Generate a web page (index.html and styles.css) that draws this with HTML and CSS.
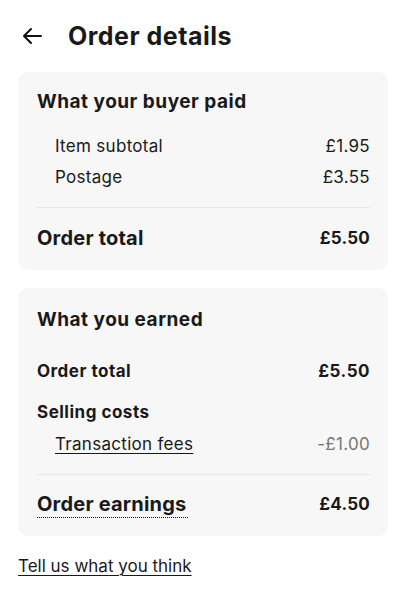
FILE: index.html
```html
<!DOCTYPE html>
<html>
<head>
<meta charset="utf-8">
<link rel="stylesheet" href="styles.css">
</head>
<body>
<div class="page">
  <header class="header">
    <svg class="back" width="22" height="22" viewBox="0 0 22 22" fill="none" stroke="#111" stroke-width="2" stroke-linecap="round" stroke-linejoin="round">
      <path d="M20 11H3M10 4L3 11L10 18"/>
    </svg>
    <h1 class="title">Order details</h1>
  </header>

  <section class="card">
    <h2 class="card-title">What your buyer paid</h2>
    <div class="rows indent">
      <div class="row"><span>Item subtotal</span><span>£1.95</span></div>
      <div class="row"><span>Postage</span><span>£3.55</span></div>
    </div>
    <div class="divider"></div>
    <div class="row total"><span>Order total</span><span class="total-val">£5.50</span></div>
  </section>

  <section class="card card2">
    <h2 class="card-title">What you earned</h2>
    <div class="row strong"><span>Order total</span><span>£5.50</span></div>
    <div class="row strong sc"><span>Selling costs</span></div>
    <div class="row indent fee"><span class="link">Transaction fees</span><span class="muted">-£1.00</span></div>
    <div class="divider d2"></div>
    <div class="row total"><span class="dotted">Order earnings</span><span class="total-val">£4.50</span></div>
  </section>

  <a class="feedback" href="#">Tell us what you think</a>
</div>
</body>
</html>
```
FILE: styles.css
```css
* { box-sizing: border-box; margin: 0; padding: 0; }
body {
  font-family: Inter, "Liberation Sans", sans-serif;
  color: #191919;
  background: #fff;
}
.page { padding: 0 18px; }
.header {
  display: flex;
  align-items: center;
  height: 72px;
  padding-left: 3px;
}
.back { margin-right: 25px; }
.title {
  font-size: 25px;
  font-weight: 700;
  letter-spacing: 0.5px;
}
.card {
  background: #f7f7f7;
  border-radius: 10px;
  padding: 18px 18px 17px 19px;
}
.card2 { margin-top: 18px; padding-top: 20px; }
.card-title {
  font-size: 19px;
  font-weight: 700;
  line-height: 24px;
  letter-spacing: 0.5px;
  margin-bottom: 17px;
}
.card2 .card-title { margin-bottom: 27px; }
.row {
  display: flex;
  justify-content: space-between;
  align-items: center;
  font-size: 17px;
  letter-spacing: 0.3px;
  line-height: 31px;
}
.indent { padding-left: 18px; }
.divider {
  height: 1px;
  background: #e5e5e5;
  margin: 14px 0 15px;
}
.d2 { margin: 18px 0 14px; }
.total { font-size: 20px; font-weight: 700; line-height: 30px; letter-spacing: 0.2px; }
.total-val { font-size: 17px; }
.strong { font-weight: 650; line-height: 24px; letter-spacing: 0.5px; }
.sc { margin-top: 17px; }
.fee { margin-top: 8px; line-height: 24px; }
.link { text-decoration: underline; text-decoration-thickness: 1px; text-underline-offset: 3px; }
.muted { color: #767676; }
.dotted {
  border-bottom: 1px dotted #191919;
  line-height: 26px;
  padding-right: 2px;
}
.feedback {
  display: inline-block;
  margin-top: 20px;
  font-size: 17px;
  line-height: 20px;
  color: #191919;
  text-decoration: underline;
  text-decoration-thickness: 1px;
  text-underline-offset: 3px;
}
```
